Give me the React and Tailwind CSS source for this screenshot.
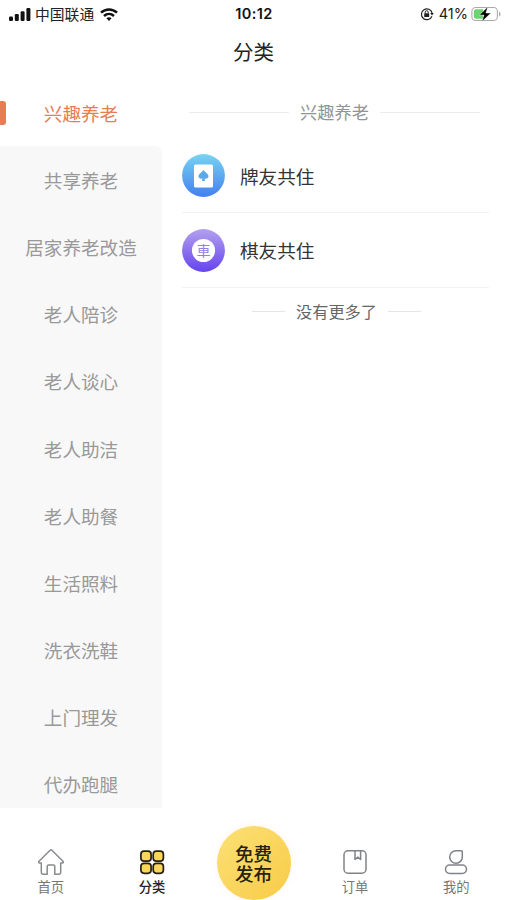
import React, { useState } from 'react';

const categories = [
  '兴趣养老',
  '共享养老',
  '居家养老改造',
  '老人陪诊',
  '老人谈心',
  '老人助洁',
  '老人助餐',
  '生活照料',
  '洗衣洗鞋',
  '上门理发',
  '代办跑腿',
];

const SignalIcon = () => (
  <svg width="22" height="13" viewBox="0 0 22 13" fill="#111">
    <rect x="0" y="8.5" width="4" height="4.5" rx="1.2" />
    <rect x="5.8" y="6" width="4" height="7" rx="1.2" />
    <rect x="11.6" y="3.2" width="4" height="9.8" rx="1.2" />
    <rect x="17.4" y="0" width="4" height="13" rx="1.2" />
  </svg>
);

const WifiIcon = () => (
  <svg width="18" height="13" viewBox="0 0 18 13" fill="none" stroke="#111" strokeWidth="2.5">
    <path d="M1 4.7C5.6.3 12.4.3 17 4.7" />
    <path d="M4 8c2.9-2.7 7.1-2.7 10 0" />
    <path d="M6.4 10.2c1.5-1.4 3.7-1.4 5.2 0L9 13z" fill="#111" stroke="none" />
  </svg>
);

const RotationLockIcon = () => (
  <svg width="14" height="14" viewBox="0 0 14 14" fill="none" stroke="#222" strokeWidth="1.2">
    <path d="M11.9 9.2A5.4 5.4 0 1 1 12.1 6" />
    <path d="M10.2 6h3.6L12 8.5z" fill="#222" stroke="none" />
    <rect x="4.2" y="6.2" width="5" height="3.8" rx=".6" fill="#222" stroke="none" />
    <path d="M5.2 6.4V5.2a1.5 1.5 0 0 1 3 0v1.2" strokeWidth="1" />
  </svg>
);

const BatteryIcon = () => (
  <svg width="31" height="16" viewBox="0 0 31 16">
    <rect x=".9" y="1.5" width="25.5" height="13" rx="3.8" fill="#fff" stroke="#aaa" strokeWidth="1.1" />
    <path d="M5 3.2h7v9.6H5a2.2 2.2 0 0 1-2.2-2.2V5.4A2.2 2.2 0 0 1 5 3.2z" fill="#6bd36f" />
    <path d="M28 5.5c2 .7 2 4.3 0 5z" fill="#aaa" />
    <path d="M16.8.8L8.5 9H13l-2 6.5L19.8 7h-5z" fill="#000" stroke="#fff" strokeWidth=".4" />
  </svg>
);

const CardIcon = () => (
  <svg width="43" height="43" viewBox="0 0 43 43">
    <defs>
      <linearGradient id="blue" x1="0" y1="0" x2="0" y2="1">
        <stop offset="0" stopColor="#77d3f2" />
        <stop offset="1" stopColor="#4380ef" />
      </linearGradient>
    </defs>
    <circle cx="21.5" cy="21.5" r="21.4" fill="url(#blue)" />
    <rect x="12" y="10.5" width="19" height="23" rx="1.5" fill="#fff" />
    <path
      d="M21.5 16c1.3 2.1 5 3.6 5 6.3 0 2.3-2.7 3-4 1.900l.6 2.700h-3.200l.6-2.700c-1.300 1.100-4 .4-4-1.900 0-2.700 3.700-4.200 5-6.300z"
      fill="#5aa8ee"
    />
  </svg>
);

const ChessIcon = () => (
  <svg width="43" height="43" viewBox="0 0 43 43">
    <defs>
      <linearGradient id="purple" x1="0" y1="0" x2="0" y2="1">
        <stop offset="0" stopColor="#b3a0ee" />
        <stop offset="1" stopColor="#6544ee" />
      </linearGradient>
    </defs>
    <circle cx="21.5" cy="21.5" r="21.4" fill="url(#purple)" />
    <circle cx="21.5" cy="21.5" r="11.6" fill="#fff" />
    <text x="21.5" y="26.6" textAnchor="middle" fontSize="14" fill="#957fee">車</text>
  </svg>
);

const HomeIcon = () => (
  <svg width="28" height="28" viewBox="0 0 28 28" fill="none" stroke="#878a8e" strokeWidth="1.5" strokeLinejoin="round">
    <path d="M13.1 2.3L2 13.2c-.7.8-.3 1.800.6 1.800h1.700v9.500q0 1.700 1.700 1.700h4.200v-7.700q0-1.500 1.500-1.500h4.600q1.500 0 1.500 1.500v7.700H22q1.700 0 1.700-1.700V15h1.700c.9 0 1.300-1 .6-1.800L14.900 2.300q-.9-.8-1.800 0z" />
  </svg>
);

const GridIcon = () => (
  <svg width="28" height="28" viewBox="0 0 28 28" fill="#fbd65b" stroke="#252016" strokeWidth="1.7">
    <rect x="2.9" y="3.2" width="10.2" height="10" rx="3.2" />
    <rect x="15.2" y="3.2" width="10.2" height="10" rx="3.2" />
    <rect x="2.9" y="15.3" width="10.2" height="10" rx="3.2" />
    <rect x="15.2" y="15.3" width="10.2" height="10" rx="3.2" />
  </svg>
);

const OrderIcon = () => (
  <svg width="28" height="28" viewBox="0 0 28 28" fill="none" stroke="#808387" strokeWidth="1.5">
    <rect x="3" y="2.8" width="22" height="22.4" rx="4" />
    <path d="M14 3v8.5l2.8-2.3 2.8 2.3V3" strokeLinejoin="round" />
  </svg>
);

const MineIcon = () => (
  <svg width="28" height="28" viewBox="0 0 28 28" fill="none" stroke="#808387" strokeWidth="1.5">
    <path d="M14 2.7h5.3q1 0 1 1v5.2A6.3 6.3 0 1 1 14 2.7z" />
    <rect x="3.5" y="17" width="21" height="8.4" rx="4.2" />
  </svg>
);

const services = [
  { name: '牌友共住', Icon: CardIcon },
  { name: '棋友共住', Icon: ChessIcon },
];

const TabItem = ({ label, Icon, active }) => (
  <button className="flex flex-1 flex-col items-center pt-[22px]">
    <Icon />
    <span className={`mt-0.5 text-[13.3px] leading-[18px] ${active ? 'font-medium text-[#252525]' : 'text-[#777]'}`}>
      {label}
    </span>
  </button>
);

export default function App() {
  const [selected, setSelected] = useState(0);

  return (
    <div className="flex h-[900px] w-[507px] flex-col overflow-hidden bg-white font-['Noto_Sans_CJK_SC',sans-serif]">
      {/* Status bar */}
      <div className="grid h-7 shrink-0 grid-cols-3 items-center pr-[5px] pl-[9px] text-[#222]">
        <div className="flex items-center">
          <SignalIcon />
          <span className="mr-1.5 ml-1 text-[14.8px] leading-7">中国联通</span>
          <WifiIcon />
        </div>
        <span className="pr-[3px] text-center font-['Inter',sans-serif] text-[14.5px] font-semibold tracking-[0.4px] text-[#111]">
          10:12
        </span>
        <div className="flex items-center justify-end">
          <RotationLockIcon />
          <span className="mr-[3px] ml-[5px] font-['Inter',sans-serif] text-[14.5px]">41%</span>
          <BatteryIcon />
        </div>
      </div>

      <h1 className="h-[51px] shrink-0 text-center text-[20.5px] leading-[47px] text-[#222]">分类</h1>

      <div className="flex h-[729px] shrink-0">
        {/* Category list */}
        <ul className="w-[162px] shrink-0 overflow-hidden">
          {categories.map((name, index) => (
            <li
              key={name}
              onClick={() => setSelected(index)}
              className={`flex h-[67.2px] items-center ${
                index === selected ? 'bg-white text-[#e87c56]' : 'bg-[#f8f8f8] text-[#999]'
              } ${index === selected + 1 ? 'rounded-tr-md' : ''}`}
            >
              <span className={`h-6 w-1.5 shrink-0 rounded-r-[3px] ${index === selected ? 'bg-[#e87c56]' : ''}`} />
              <span className="flex-1 pr-1.5 text-center text-[18.6px] leading-7">{name}</span>
            </li>
          ))}
        </ul>

        <div className="flex-1 pr-[18px] pl-5">
          <div className="flex h-[59.5px] items-center justify-center gap-[11px] pt-[7px] pr-0.5">
            <span className="h-px w-[100px] bg-[#ececec]" />
            <span className="text-[17.2px] text-[#929496]">兴趣养老</span>
            <span className="h-px w-[100px] bg-[#ececec]" />
          </div>
          {services.map(({ name, Icon }) => (
            <div key={name} className="flex h-[74.5px] items-center border-b border-[#f2f2f2] pt-px">
              <Icon />
              <span className="ml-[15px] text-[18.6px] text-[#333]">{name}</span>
            </div>
          ))}
          <div className="flex h-[48px] items-center justify-center gap-[11px] pl-0.5">
            <span className="h-px w-[33px] bg-[#e5e5e5]" />
            <span className="text-[16.2px] text-[#666]">没有更多了</span>
            <span className="h-px w-[33px] bg-[#e5e5e5]" />
          </div>
        </div>
      </div>

      <div className="mt-[18px] flex h-[74px] shrink-0">
        <TabItem label="首页" Icon={HomeIcon} />
        <TabItem label="分类" Icon={GridIcon} active />
        <div className="flex flex-1 justify-center">
          <button className="size-[74px] shrink-0 rounded-full bg-linear-to-br from-[#fbe174] to-[#f8cb46] text-[18.5px] leading-5 font-medium text-[#27210f] shadow-[0_0_8px_#fff3ee]">
            免费
            <br />
            发布
          </button>
        </div>
        <TabItem label="订单" Icon={OrderIcon} />
        <TabItem label="我的" Icon={MineIcon} />
      </div>
    </div>
  );
}
